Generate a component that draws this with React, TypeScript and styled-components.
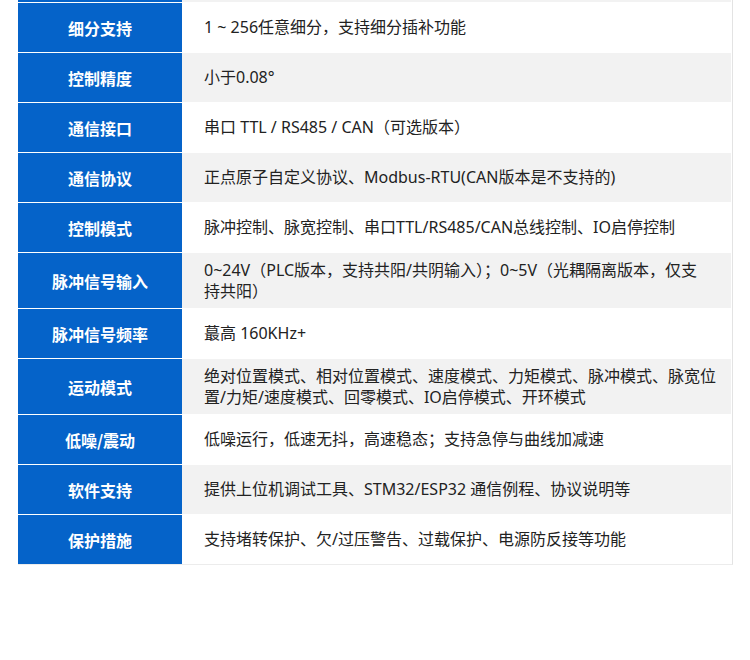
import { FC } from "react";
import styled, { createGlobalStyle } from "styled-components";

const GlobalStyle = createGlobalStyle`
  html, body {
    margin: 0;
    padding: 0;
    background: #ffffff;
  }
  body {
    font-family: "Noto Sans", "Noto Sans CJK SC", sans-serif;
  }
`;

interface Spec {
  label: string;
  lines: string[];
}

const SPECS: Spec[] = [
  { label: "细分支持", lines: ["1 ~ 256任意细分，支持细分插补功能"] },
  { label: "控制精度", lines: ["小于0.08°"] },
  { label: "通信接口", lines: ["串口 TTL / RS485 / CAN（可选版本）"] },
  { label: "通信协议", lines: ["正点原子自定义协议、Modbus-RTU(CAN版本是不支持的)"] },
  { label: "控制模式", lines: ["脉冲控制、脉宽控制、串口TTL/RS485/CAN总线控制、IO启停控制"] },
  {
    label: "脉冲信号输入",
    lines: ["0~24V（PLC版本，支持共阳/共阴输入）；0~5V（光耦隔离版本，仅支", "持共阳）"],
  },
  { label: "脉冲信号频率", lines: ["蕞高 160KHz+"] },
  {
    label: "运动模式",
    lines: ["绝对位置模式、相对位置模式、速度模式、力矩模式、脉冲模式、脉宽位", "置/力矩/速度模式、回零模式、IO启停模式、开环模式"],
  },
  { label: "低噪/震动", lines: ["低噪运行，低速无抖，高速稳态；支持急停与曲线加减速"] },
  { label: "软件支持", lines: ["提供上位机调试工具、STM32/ESP32 通信例程、协议说明等"] },
  { label: "保护措施", lines: ["支持堵转保护、欠/过压警告、过载保护、电源防反接等功能"] },
];

const App: FC = () => {
  return (
    <>
      <GlobalStyle />
      <Page>
        <Table>
          <Label $height={2} />
          <Value $height={2} $shaded />
          {SPECS.map((spec, i) => {
            const h = spec.lines.length > 1 ? 55 : 49;
            return [
              <Label key={`l${i}`} $height={h}>
                {spec.label}
              </Label>,
              <Value key={`v${i}`} $height={h} $shaded={i % 2 === 1}>
                {spec.lines.map((line, j) => (
                  <Line key={j}>{line}</Line>
                ))}
              </Value>,
            ];
          })}
        </Table>
      </Page>
    </>
  );
};

export default App;

const Page = styled.div`
  width: 750px;
  height: 660px;
  background: #ffffff;
  padding: 0 18px 0 18px;
  box-sizing: border-box;
`;

const Table = styled.div`
  display: grid;
  grid-template-columns: 164px 549px;
  row-gap: 1px;
  background: #ffffff;
  border-right: 1px solid #e3e3e3;
  border-bottom: 1px solid #ececec;
  width: 714px;
`;

const Label = styled.div<{ $height: number }>`
  height: ${({ $height }) => $height}px;
  background: #0563c9;
  color: #ffffff;
  font-family: "Noto Sans CJK SC", sans-serif;
  font-weight: 700;
  font-size: 16px;
  display: flex;
  align-items: center;
  justify-content: center;
`;

const Value = styled.div<{ $height: number; $shaded?: boolean }>`
  height: ${({ $height }) => $height}px;
  background: ${({ $shaded }) => ($shaded ? "#f2f2f2" : "#ffffff")};
  color: #222222;
  font-size: 16px;
  line-height: 21px;
  padding: 0 12px 0 22px;
  display: flex;
  flex-direction: column;
  justify-content: center;
`;

const Line = styled.div`
  white-space: nowrap;
`;
